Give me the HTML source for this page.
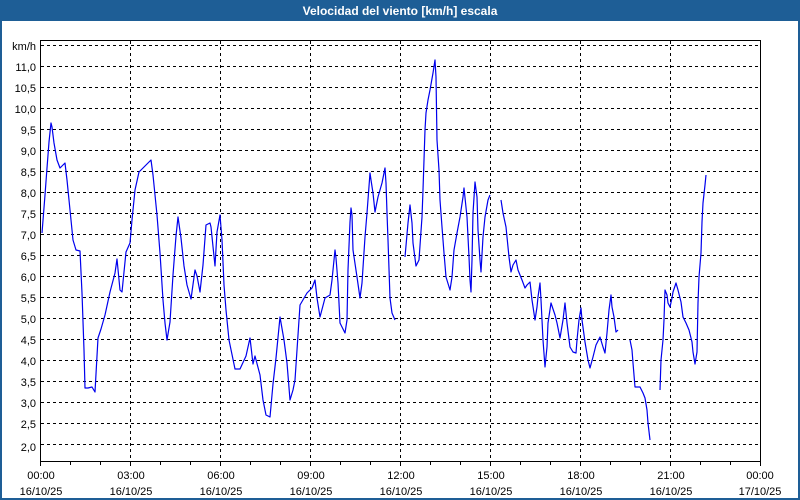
<!DOCTYPE html>
<html><head><meta charset="utf-8"><style>
body{margin:0;width:800px;height:500px;overflow:hidden;background:#fff;font-family:"Liberation Sans",Tahoma,sans-serif}
</style></head><body>
<svg width="800" height="500" viewBox="0 0 800 500" xmlns="http://www.w3.org/2000/svg" style="display:block">
<rect x="0" y="0" width="800" height="500" fill="#1e5e96"/>
<rect x="2" y="21" width="796" height="477" fill="#fff"/>
<text x="400" y="15" fill="#fff" font-size="12" font-weight="bold" text-anchor="middle" font-family="Liberation Sans, sans-serif">Velocidad del viento [km/h] escala</text>
<g stroke="#000" stroke-width="1" stroke-dasharray="3,3" shape-rendering="crispEdges">
<path d="M41 45.5H760M41 66.5H760M41 87.5H760M41 108.5H760M41 129.5H760M41 150.5H760M41 171.5H760M41 192.5H760M41 213.5H760M41 234.5H760M41 255.5H760M41 276.5H760M41 297.5H760M41 318.5H760M41 339.5H760M41 360.5H760M41 381.5H760M41 402.5H760M41 423.5H760M41 444.5H760"/>
<path d="M130.5 41V461M220.5 41V461M310.5 41V461M400.5 41V461M490.5 41V461M580.5 41V461M670.5 41V461"/>
</g>
<g stroke="#000" stroke-width="1" shape-rendering="crispEdges" fill="none">
<path d="M40.5 40V461.5H760"/>
<path d="M40 40.5H760.5V461"/>
<path d="M40.5 461V466M70.5 461V465M100.5 461V465M130.5 461V466M160.5 461V465M190.5 461V465M220.5 461V466M250.5 461V465M280.5 461V465M310.5 461V466M340.5 461V465M370.5 461V465M400.5 461V466M430.5 461V465M460.5 461V465M490.5 461V466M520.5 461V465M550.5 461V465M580.5 461V466M610.5 461V465M640.5 461V465M670.5 461V466M700.5 461V465M730.5 461V465M760.5 461V466"/>
</g>
<g font-size="11" fill="#000" text-anchor="end" font-family="Liberation Sans, sans-serif">
<text x="36" y="50">km/h</text>
<text x="36" y="71">11,0</text><text x="36" y="92">10,5</text><text x="36" y="113">10,0</text><text x="36" y="134">9,5</text><text x="36" y="155">9,0</text><text x="36" y="176">8,5</text><text x="36" y="197">8,0</text><text x="36" y="218">7,5</text><text x="36" y="239">7,0</text><text x="36" y="260">6,5</text><text x="36" y="281">6,0</text><text x="36" y="302">5,5</text><text x="36" y="323">5,0</text><text x="36" y="344">4,5</text><text x="36" y="365">4,0</text><text x="36" y="386">3,5</text><text x="36" y="407">3,0</text><text x="36" y="428">2,5</text><text x="36" y="451">2,0</text>
</g>
<g font-size="11" fill="#000" text-anchor="middle" font-family="Liberation Sans, sans-serif">
<text x="41" y="479">00:00</text><text x="41" y="495">16/10/25</text>
<text x="131" y="479">03:00</text><text x="131" y="495">16/10/25</text>
<text x="221" y="479">06:00</text><text x="221" y="495">16/10/25</text>
<text x="311" y="479">09:00</text><text x="311" y="495">16/10/25</text>
<text x="401" y="479">12:00</text><text x="401" y="495">16/10/25</text>
<text x="491" y="479">15:00</text><text x="491" y="495">16/10/25</text>
<text x="581" y="479">18:00</text><text x="581" y="495">16/10/25</text>
<text x="671" y="479">21:00</text><text x="671" y="495">16/10/25</text>
<text x="760" y="479">00:00</text><text x="760" y="495">17/10/25</text>
</g>
<g stroke="#0000ee" stroke-width="1.2" fill="none" stroke-linejoin="round">
<polyline points="42,233 45,195 47,168 49,142 51,123 52,127 54,143 57,160 60,168 62,166 65,163 67,180 70,210 73,240 76,250 80,251 82,293 84,350 85,388 88,388 92,387 95,392 98,338 101,329 105,315 110,292 115,273 117,259 120,290 122,292 126,252 130,243 132,220 135,190 139,172 146,165 151,160 153,175 157,215 160,253 163,300 165,323 167,340 170,322 173,275 176,236 178,217 181,238 184,266 187,285 191,299 195,270 197,276 200,292 203,265 206,225 210,223 211,227 215,266 217,232 220,215 222,240 224,285 226,310 229,340 235,369 240,369 246,356 250,338 253,364 255,356 260,375 263,400 266,415 270,417 273,384 276,358 280,317 284,340 287,363 290,400 293,390 295,380 297,350 300,305 307,293 312,288 315,280 317,298 320,317 325,298 330,295 332,280 335,250 336,258 338,283 340,323 345,333 347,320 348,270 350,222 351,208 352,215 353,250 357,277 360,298 362,283 365,237 367,213 370,173 371,180 373,193 375,212 378,197 382,183 385,168 386,183 387,213 388,240 390,298 392,313 395,320"/>
<polyline points="405,257 408,223 410,205 412,223 413,243 416,266 419,260 422,217 423,190 424,160 425,130 426,113 428,100 430,90 433,73 435,60 436,77 437,140 439,170 440,200 442,227 444,253 446,277 450,290 452,277 454,250 457,233 460,217 463,197 464,188 467,217 469,257 470,280 471,292 472,260 473,213 475,182 477,197 478,230 480,260 481,272 483,237 485,217 488,200 490,195"/>
<polyline points="501,200 503,213 506,227 509,257 511,272 513,265 516,260 518,270 522,280 525,288 527,285 530,282 532,300 535,320 537,307 538,297 540,283 541,300 543,340 545,367 547,347 548,323 551,303 555,315 557,323 560,338 563,320 565,303 567,323 570,347 573,352 576,353 577,340 579,320 581,308 582,320 585,342 588,360 590,368 593,357 596,345 600,337 603,347 605,353 607,333 609,310 611,295 612,307 614,317 616,332 618,330"/>
<polyline points="630,340 632,350 633,363 635,387 640,387 643,393 645,398 647,410 648,423 650,440"/>
<polyline points="660,390 661,360 663,340 664,320 665,290 667,295 668,303 670,307 672,298 673,292 676,283 678,290 681,302 683,317 686,323 689,330 692,342 693,352 695,364 697,352 698,303 699,277 701,253 702,222 703,203 705,185 706,175"/>
</g>
</svg>
</body></html>
